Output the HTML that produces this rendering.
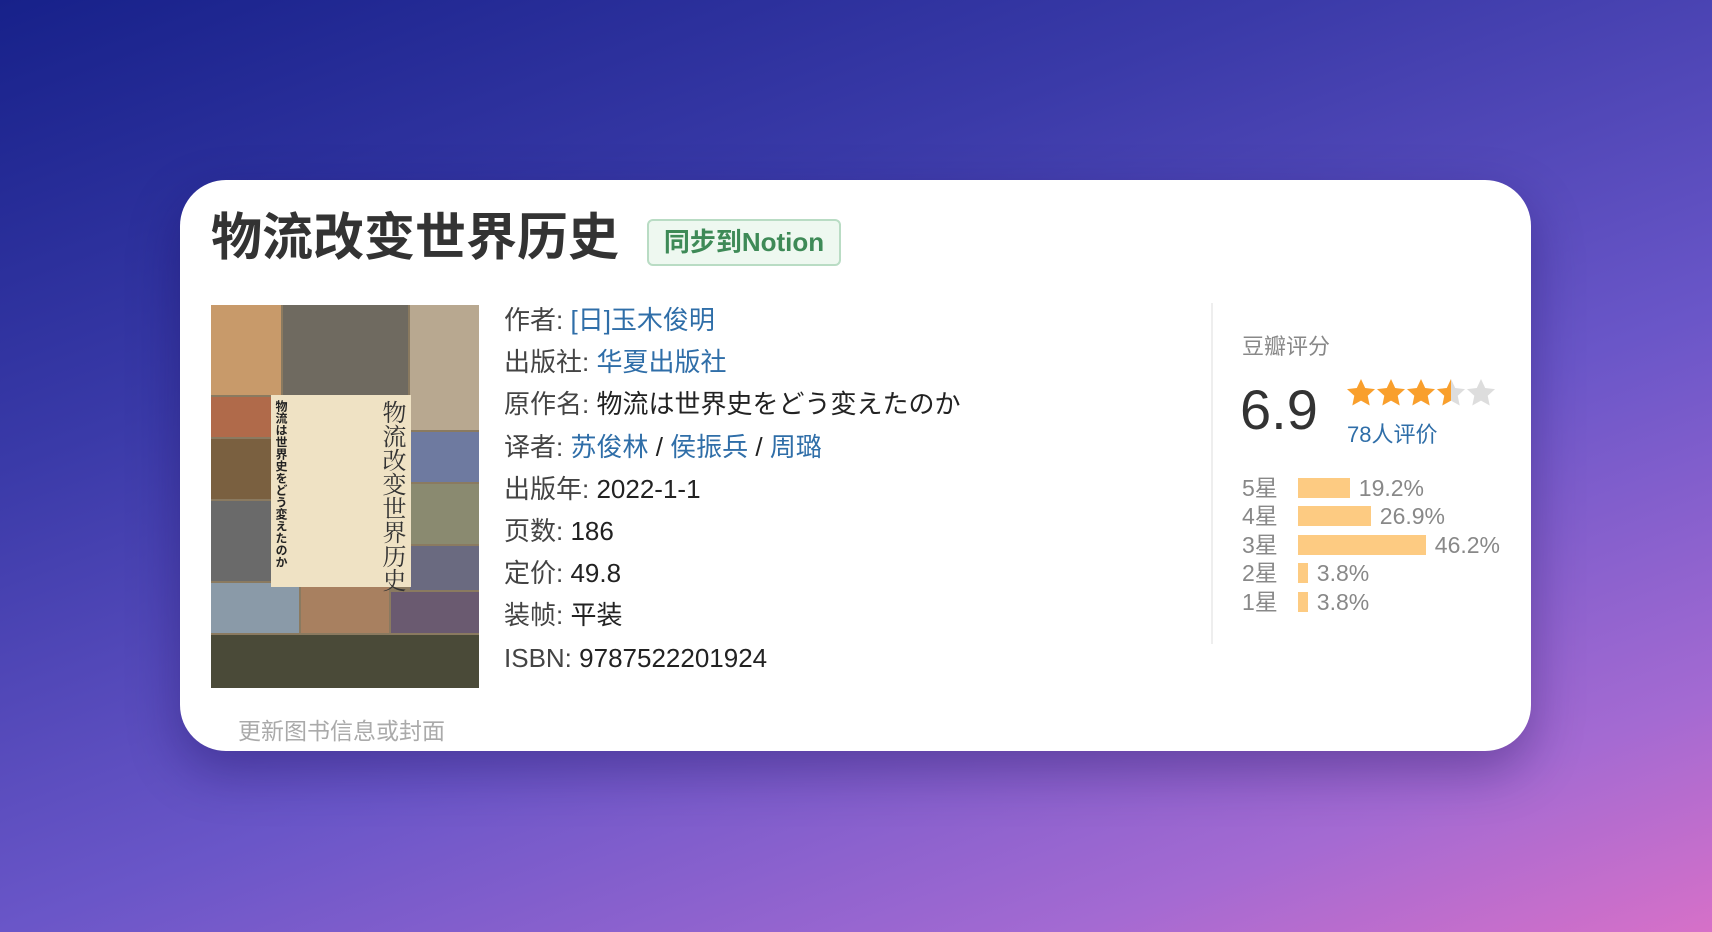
<!DOCTYPE html>
<html><head><meta charset="utf-8"><style>
*{margin:0;padding:0;box-sizing:border-box}
body{width:1712px;height:932px;overflow:hidden;position:relative;font-family:"Liberation Sans","Noto Sans CJK SC",sans-serif;
background:linear-gradient(160deg,#17218a 0%,#3a3aa8 30%,#6a56c8 60%,#a46ad2 85%,#d670c8 100%)}
.card{position:absolute;left:180px;top:180px;width:1351px;height:571px;background:#fff;border-radius:46px;box-shadow:0 20px 50px rgba(20,10,80,.35)}
.title{position:absolute;left:211px;top:208px;font-size:51px;font-weight:bold;color:#333;line-height:60px}
.btn{position:absolute;left:647px;top:219px;width:194px;height:47px;border:2px solid #b9dcc4;background:#eef8f0;border-radius:6px;color:#3e8a57;font-weight:bold;font-size:26px;line-height:43px;text-align:center}
.cover{position:absolute;left:211px;top:305px;width:268px;height:383px;overflow:hidden;background:#8a7a60}
.cover div{position:absolute}
.info{position:absolute;left:504px;top:299px;font-size:26px;color:#222;line-height:42.2px}
.info .k{color:#444}
.info a{color:#2f6ea8;text-decoration:none}
.div{position:absolute;left:1211px;top:303px;width:2px;height:341px;background:#eee}
.rt{position:absolute;font-size:22px;color:#888}
.row{position:absolute;left:1242px;font-size:23px;color:#888;height:28px;line-height:28px;white-space:nowrap}
.row span.b{display:inline-block;height:20px;background:#fdcb82;vertical-align:middle;margin:0 9px 0 20px;position:relative;top:-2px}
</style></head><body>
<div class="card"></div>
<div class="title">物流改变世界历史</div>
<div class="btn">同步到Notion</div>
<div class="cover">
 <div style="left:0;top:0;width:70px;height:90px;background:#c89a6a"></div>
 <div style="left:72px;top:0;width:125px;height:90px;background:#6f6a60"></div>
 <div style="left:199px;top:0;width:69px;height:125px;background:#b8a890"></div>
 <div style="left:0;top:92px;width:60px;height:40px;background:#b06a4a"></div>
 <div style="left:0;top:134px;width:60px;height:60px;background:#7a6040"></div>
 <div style="left:0;top:196px;width:60px;height:80px;background:#6a6a6a"></div>
 <div style="left:199px;top:127px;width:69px;height:50px;background:#6e7aa0"></div>
 <div style="left:199px;top:179px;width:69px;height:60px;background:#8a8a70"></div>
 <div style="left:199px;top:241px;width:69px;height:44px;background:#6a6a80"></div>
 <div style="left:0;top:278px;width:88px;height:50px;background:#8a9aa8"></div>
 <div style="left:90px;top:278px;width:88px;height:50px;background:#a88060"></div>
 <div style="left:180px;top:287px;width:88px;height:41px;background:#6a5a70"></div>
 <div style="left:0;top:330px;width:268px;height:53px;background:#4a4a38"></div>
 <div style="left:60px;top:90px;width:140px;height:192px;background:#efe2c4"></div>
 <div style="left:150px;top:95px;width:44px;font-size:24px;color:#333;writing-mode:vertical-rl;line-height:22px;font-family:'Noto Serif CJK SC',serif">物流改变世界历史</div>
 <div style="left:62px;top:95px;font-size:12px;color:#222;writing-mode:vertical-rl;font-weight:bold">物流は世界史をどう変えたのか</div>
</div>
<div class="info">
<div><span class="k">作者:</span> <a>[日]玉木俊明</a></div>
<div><span class="k">出版社:</span> <a>华夏出版社</a></div>
<div><span class="k">原作名:</span> 物流は世界史をどう変えたのか</div>
<div><span class="k">译者:</span> <a>苏俊林</a> / <a>侯振兵</a> / <a>周璐</a></div>
<div><span class="k">出版年:</span> 2022-1-1</div>
<div><span class="k">页数:</span> 186</div>
<div><span class="k">定价:</span> 49.8</div>
<div><span class="k">装帧:</span> 平装</div>
<div><span class="k">ISBN:</span> 9787522201924</div>
</div>
<div class="div"></div>
<div class="rt" style="left:1242px;top:329px">豆瓣评分</div>
<div style="position:absolute;left:1240px;top:378px;font-size:56px;color:#333;line-height:64px">6.9</div>
<svg style="position:absolute;left:1346px;top:378px" width="152" height="32" viewBox="0 0 152 32">
<defs><path id="s" d="M15 1l4.2 9 9.8 1.1-7.3 6.7 2 9.7L15 22.6 6.3 27.5l2-9.7L1 11.1l9.8-1.1z"/>
<clipPath id="h"><rect x="0" y="0" width="15" height="32"/></clipPath></defs>
<use href="#s" fill="#f99f2c"/><use href="#s" x="30" fill="#f99f2c"/><use href="#s" x="60" fill="#f99f2c"/>
<use href="#s" x="90" fill="#ddd"/><g transform="translate(90 0)"><use href="#s" fill="#f99f2c" clip-path="url(#h)"/></g>
<use href="#s" x="120" fill="#ddd"/></svg>
<div style="position:absolute;left:1347px;top:417px;font-size:22px;color:#2f6ea8">78人评价</div>
<div class="row" style="top:474px">5星<span class="b" style="width:52px"></span>19.2%</div>
<div class="row" style="top:502px">4星<span class="b" style="width:73px"></span>26.9%</div>
<div class="row" style="top:531px">3星<span class="b" style="width:128px"></span>46.2%</div>
<div class="row" style="top:559px">2星<span class="b" style="width:10px"></span>3.8%</div>
<div class="row" style="top:588px">1星<span class="b" style="width:10px"></span>3.8%</div>
<div style="position:absolute;left:238px;top:712px;font-size:23px;color:#aaa">更新图书信息或封面</div>
</body></html>
